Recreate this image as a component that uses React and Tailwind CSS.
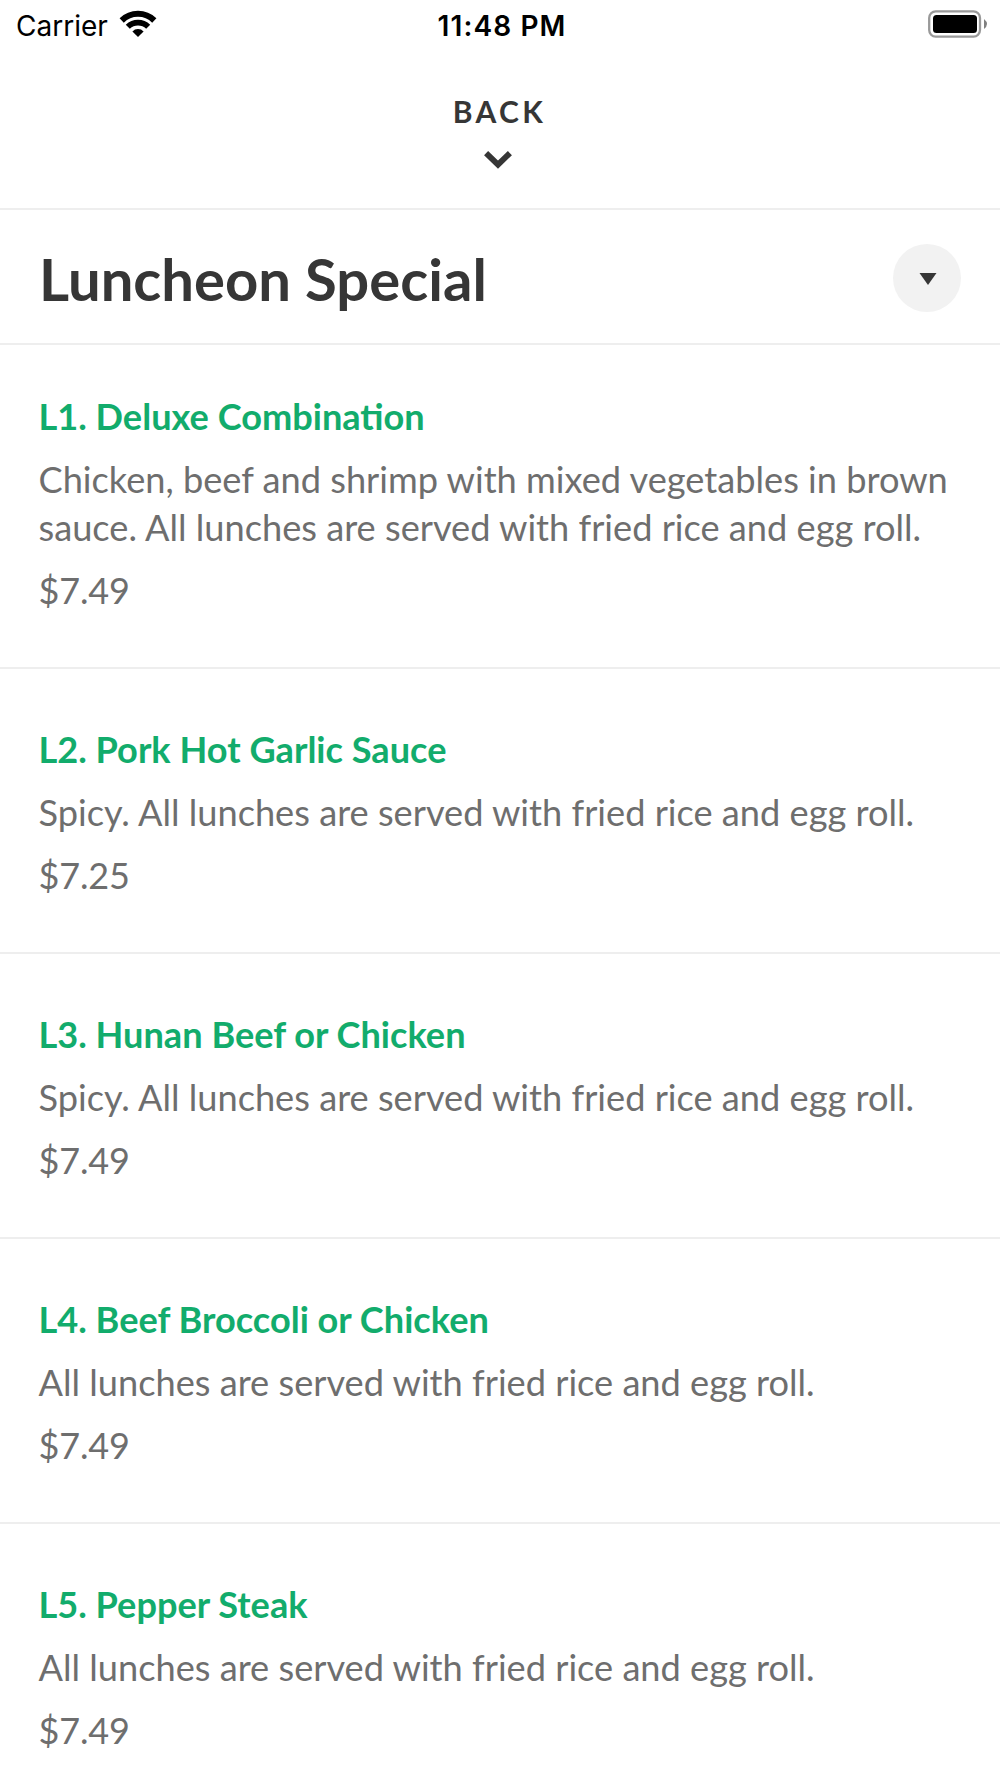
import React from "react";

const menuItems = [
  {
    id: 1,
    name: "L1. Deluxe Combination",
    description:
      "Chicken, beef and shrimp with mixed vegetables in brown sauce. All lunches are served with fried rice and egg roll.",
    price: "$7.49",
  },
  {
    id: 2,
    name: "L2. Pork Hot Garlic Sauce",
    description: "Spicy. All lunches are served with fried rice and egg roll.",
    price: "$7.25",
  },
  {
    id: 3,
    name: "L3. Hunan Beef or Chicken",
    description: "Spicy. All lunches are served with fried rice and egg roll.",
    price: "$7.49",
  },
  {
    id: 4,
    name: "L4. Beef Broccoli or Chicken",
    description: "All lunches are served with fried rice and egg roll.",
    price: "$7.49",
  },
  {
    id: 5,
    name: "L5. Pepper Steak",
    description: "All lunches are served with fried rice and egg roll.",
    price: "$7.49",
  },
];

const WifiIcon = () => (
  <svg className="w-[38px] h-[28px]" viewBox="0 0 38 28">
    <path d="M2.7 10.5 A23.3 23.3 0 0 1 35.3 10.5" fill="none" stroke="#000" strokeWidth="6" />
    <path d="M8.8 16.8 A14.6 14.6 0 0 1 29.2 16.8" fill="none" stroke="#000" strokeWidth="5.8" />
    <path d="M13.4 21.4 A8 8 0 0 1 24.6 21.4 L19 27 Z" fill="#000" />
  </svg>
);

const BatteryIcon = () => (
  <svg className="w-[60px] h-[28px]" viewBox="0 0 60 28">
    <rect x="1.2" y="1.4" width="50.8" height="25.2" rx="6.5" fill="none" stroke="#999" strokeWidth="2.3" />
    <rect x="5" y="5" width="44" height="18" rx="3.5" fill="#000" />
    <path d="M56 9 Q59 11.5 59 14 Q59 16.5 56 19 Z" fill="#808080" />
  </svg>
);

const StatusBar = () => (
  <div className="h-[50px] flex items-start justify-between pl-[9px] pr-3 font-[Inter,sans-serif] text-black">
    <div className="flex-1 flex items-start gap-[11px] pl-[7px]">
      <span className="pt-px text-[28px] leading-[50px]">Carrier</span>
      <div className="pt-[10px]">
        <WifiIcon />
      </div>
    </div>
    <span className="pt-px text-[28px] leading-[50px] font-semibold tracking-[1.1px]">11:48 PM</span>
    <div className="flex-1 flex justify-end pt-[10px]">
      <BatteryIcon />
    </div>
  </div>
);

const MenuItem = ({ item }) => (
  <li className="px-[38.5px] pt-[56px] pb-[53px] border-b-2 border-[#eeeeee] first:pt-[47px]">
    <h2 className="text-[36.15px] leading-[48px] font-bold text-[#12ac6c]">{item.name}</h2>
    <p className="mt-[15px] -mr-2 text-[36.2px] leading-[48px]">{item.description}</p>
    <p className="mt-[15px] text-[36px] leading-[48px] tracking-[-0.15px]">{item.price}</p>
  </li>
);

const App = () => {
  return (
    <div className="w-[1000px] h-[1778px] overflow-hidden bg-white font-[Lato,sans-serif] text-[#6e6e6e]">
      <StatusBar />

      {/* Back */}
      <button className="w-full h-[160px] pt-[41px] pr-[3px] flex flex-col items-center border-b-2 border-[#eeeeee] text-[#363636]">
        <span className="pl-[2px] text-[30px] leading-[40px] font-bold tracking-[3.4px]">BACK</span>
        <svg className="mt-[19px] mr-px w-[28px] h-[20px]" viewBox="0 0 28 20">
          <path d="M2.1 3.1 L14 14.7 L25.9 3.1" fill="none" stroke="#363636" strokeWidth="5.8" />
        </svg>
      </button>

      {/* Section header */}
      <div className="h-[135px] pl-[39px] pr-[39px] pt-[2px] flex items-center justify-between border-b-2 border-[#eeeeee]">
        <h1 className="pt-[2px] text-[58px] leading-[70px] font-bold text-[#363636]">Luncheon Special</h1>
        <button className="w-[68px] h-[68px] rounded-full bg-[#f2f2f2] flex items-center justify-center">
          <svg className="mt-[2px] ml-[2px] w-[18px] h-[12px]" viewBox="0 0 18 12">
            <path d="M0.5 0 H17.5 L9 12 Z" fill="#363636" />
          </svg>
        </button>
      </div>

      <ul>
        {menuItems.map((item) => (
          <MenuItem key={item.id} item={item} />
        ))}
      </ul>
    </div>
  );
};

export default App;
